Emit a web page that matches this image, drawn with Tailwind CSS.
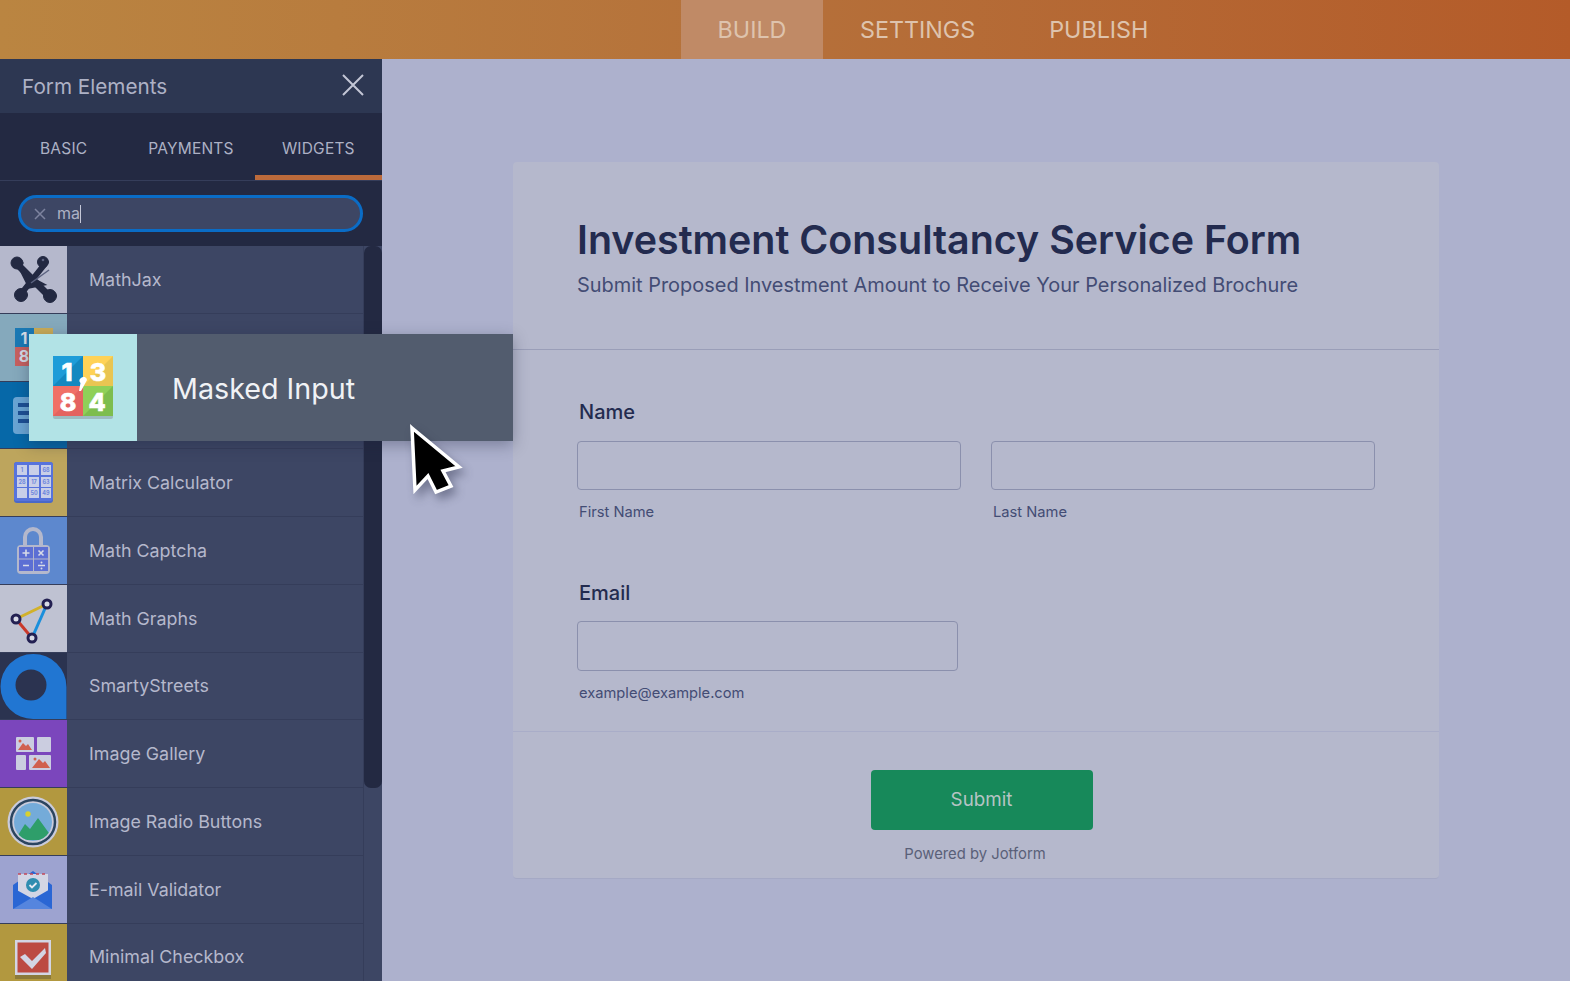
<!DOCTYPE html>
<html>
<head>
    <title>Form Builder</title>
    <meta name="viewport" content="width=device-width, initial-scale=1.0">
    <script src="https://cdn.jsdelivr.net/npm/@tailwindcss/browser@4"></script>
</head>
<body class="relative h-screen overflow-hidden bg-[#adb1cd] font-[Inter,sans-serif]">
    <!-- Top bar -->
    <header class="flex h-[59px] pl-[681px] bg-gradient-to-r from-[#ba8541] via-[#b5703a] to-[#b45b29] text-[23.3px] leading-[59px] text-[#dec3ad]">
        <div class="w-[142px] text-center bg-[#c08a66]">BUILD</div>
        <div class="px-[37px]">SETTINGS</div>
        <div class="px-[37px]">PUBLISH</div>
    </header>

    <div class="flex h-[922px]">
        <!-- Form elements panel -->
        <aside class="flex flex-col w-[382px] shrink-0 bg-[#232942]">
            <div class="flex items-center justify-between h-[54px] pl-[22px] pr-[18px] bg-[#2d3752]">
                <span class="mt-[2px] text-[20.7px] text-[#adb1c5]">Form Elements</span>
                <svg width="22" height="22" viewBox="0 0 22 22" class="mb-[3px]" fill="none" stroke="#c3c6d6" stroke-width="2"><path d="M1 1l20 20M21 1L1 21"/></svg>
            </div>
            <div class="flex h-[68px] pt-[4px] border-b border-[#353d5a] text-[15.5px] tracking-[0.2px] text-[#adb1c5]">
                <div class="flex-1 flex items-center justify-center">BASIC</div>
                <div class="flex-1 flex items-center justify-center">PAYMENTS</div>
                <div class="flex-1 flex items-center justify-center border-b-[5px] border-[#bc6a3b] pt-[5px]">WIDGETS</div>
            </div>
            <div class="h-[65px] pt-[14px] pl-[18px]">
                <div class="flex items-center w-[345px] h-[37px] rounded-full border-[3px] border-[#0a6cc6] bg-[#3d4664] pl-[13px] text-[#adb1c5]">
                    <svg width="12" height="12" viewBox="0 0 12 12" fill="none" stroke="#7d839f" stroke-width="1.5"><path d="M1 1l10 10M11 1L1 11"/></svg>
                    <span class="ml-[11px] mb-[2px] text-[16px]">ma</span><span class="w-px h-[18px] bg-[#c5c8d8]"></span>
                </div>
            </div>
            <div class="flex flex-1 overflow-hidden">
                <div class="w-[363px] shrink-0">
                    <!-- MathJax -->
                    <div class="flex h-[67.75px] items-stretch border-b border-[#353d5a] bg-[#3d4664]">
                        <div class="w-[67px] shrink-0 bg-[#b5b8cc]">
                            <svg width="67" height="67" viewBox="0 0 67 67"><g stroke="#232942" stroke-linecap="round" fill="#232942"><path d="M19 20L46 47" stroke-width="7" fill="none"/><path d="M44 19L21 48" stroke-width="6" fill="none"/><path d="M25 30L40 38L30 40z" stroke-width="5"/><circle cx="17" cy="17" r="6"/><circle cx="43" cy="16" r="5.500"/><circle cx="21" cy="49" r="6.500"/><circle cx="50" cy="50" r="6.500"/></g><path d="M31 37L49 24" stroke="#5c6380" stroke-width="1.500"/><circle cx="43" cy="14" r="1.300" fill="#5c6380"/></svg>
                        </div>
                        <span class="self-center mt-[2px] ml-[22px] text-[17.85px] text-[#b5b8cc]">MathJax</span>
                    </div>
                    <!-- Masked Input (label covered by the dragged copy) -->
                    <div class="flex h-[67.75px] items-stretch border-b border-[#353d5a] bg-[#3d4664]">
                        <div class="flex w-[67px] shrink-0 pl-[15px] pt-[14px] bg-[#85a9bc]">
                            <svg width="38" height="38" viewBox="0 0 38 38"><rect width="19" height="19" fill="#1b79b4"/><rect x="19" width="19" height="19" fill="#c9ab57"/><rect y="19" width="19" height="19" fill="#c7605f"/><rect x="19" y="19" width="19" height="19" fill="#79a85a"/><text x="9" y="16" text-anchor="middle" font-size="16" font-weight="700" fill="#d6dce6">1</text><text x="9" y="34" text-anchor="middle" font-size="16" font-weight="700" fill="#d6dce6">8</text></svg>
                        </div>
                    </div>
                    <!-- row covered by the dragged copy -->
                    <div class="flex h-[67.75px] items-stretch border-b border-[#353d5a] bg-[#3d4664]">
                        <div class="flex w-[67px] shrink-0 pl-[13px] pt-[15px] bg-[#0668a8]">
                            <svg width="42" height="38" viewBox="0 0 42 38"><rect width="42" height="37" rx="4" fill="#6aa5d4"/><path d="M5 8h30M5 16h30M5 24h30" stroke="#1c4f94" stroke-width="4"/></svg>
                        </div>
                    </div>
                    <!-- Matrix Calculator -->
                    <div class="flex h-[67.75px] items-stretch border-b border-[#353d5a] bg-[#3d4664]">
                        <div class="w-[67px] shrink-0 bg-[#bda55d]">
                            <svg width="67" height="67" viewBox="0 0 67 67"><rect x="14" y="13" width="39" height="41" rx="3" fill="#4a68c8"/><rect x="14" y="13" width="39" height="39" rx="3" fill="#5773dc"/><g fill="#c9cfe8"><rect x="17" y="16" width="10" height="10"/><rect x="29" y="16" width="10" height="10"/><rect x="41" y="16" width="10" height="10"/><rect x="17" y="28" width="10" height="10"/><rect x="29" y="28" width="10" height="10"/><rect x="41" y="28" width="10" height="10"/><rect x="17" y="39" width="10" height="10"/><rect x="29" y="39" width="10" height="10"/><rect x="41" y="39" width="10" height="10"/></g><g font-size="5.5" font-weight="700" fill="#6d86dc" text-anchor="middle"><text x="22" y="23">1</text><text x="46" y="23">68</text><text x="22" y="35">28</text><text x="34" y="35">17</text><text x="46" y="35">63</text><text x="34" y="46">50</text><text x="46" y="46">49</text></g></svg>
                        </div>
                        <span class="self-center mt-[2px] ml-[22px] text-[17.85px] text-[#b5b8cc]">Matrix Calculator</span>
                    </div>
                    <!-- Math Captcha -->
                    <div class="flex h-[67.75px] items-stretch border-b border-[#353d5a] bg-[#3d4664]">
                        <div class="w-[67px] shrink-0 bg-[#5d88ce]">
                            <svg width="67" height="67" viewBox="0 0 67 67"><path d="M25 30V20a8 8 0 0 1 16 0v10" fill="none" stroke="#b4b8cc" stroke-width="4"/><rect x="17" y="28" width="33" height="29" rx="4" fill="#b4b8cc"/><g fill="#5c6fd4"><rect x="19" y="30" width="14" height="11.5"/><rect x="34" y="30" width="14" height="11.5"/><rect x="19" y="42.5" width="14" height="11.5"/><rect x="34" y="42.5" width="14" height="11.5"/></g><path d="M22.5 36h7M26 32.5v7M38.5 33.5l5 5M43.5 33.5l-5 5M23 48.5h6M38 48.5h7" stroke="#d8dbe8" stroke-width="1.6" fill="none"/><circle cx="41.5" cy="45.5" r="1" fill="#d8dbe8"/><circle cx="41.5" cy="51.5" r="1" fill="#d8dbe8"/></svg>
                        </div>
                        <span class="self-center mt-[2px] ml-[22px] text-[17.85px] text-[#b5b8cc]">Math Captcha</span>
                    </div>
                    <!-- Math Graphs -->
                    <div class="flex h-[67.75px] items-stretch border-b border-[#353d5a] bg-[#3d4664]">
                        <div class="w-[67px] shrink-0 bg-[#bfc2d2]">
                            <svg width="67" height="67" viewBox="0 0 67 67"><path d="M16 34L47 19" stroke="#d2b12a" stroke-width="3"/><path d="M16 34L32 53" stroke="#c9382a" stroke-width="3"/><path d="M47 19L32 53" stroke="#1a8fdc" stroke-width="3"/><g fill="#d8dae6" stroke="#232052" stroke-width="3"><circle cx="47" cy="19" r="4"/><circle cx="16" cy="34" r="4"/><circle cx="32" cy="53" r="4"/></g></svg>
                        </div>
                        <span class="self-center mt-[2px] ml-[22px] text-[17.85px] text-[#b5b8cc]">Math Graphs</span>
                    </div>
                    <!-- SmartyStreets -->
                    <div class="flex h-[67.75px] items-stretch border-b border-[#353d5a] bg-[#3d4664]">
                        <div class="w-[67px] shrink-0 bg-[#2b3350]">
                            <svg width="67" height="67" viewBox="0 0 67 67"><path d="M33 1A33 33 0 0 1 66.5 34V66H33A32.5 32.5 0 0 1 33 1z" fill="#2176d2"/><circle cx="31" cy="32" r="15.5" fill="#2b3350"/></svg>
                        </div>
                        <span class="self-center mt-[2px] ml-[22px] text-[17.85px] text-[#b5b8cc]">SmartyStreets</span>
                    </div>
                    <!-- Image Gallery -->
                    <div class="flex h-[67.75px] items-stretch border-b border-[#353d5a] bg-[#3d4664]">
                        <div class="w-[67px] shrink-0 bg-[#7b46bc]">
                            <svg width="67" height="67" viewBox="0 0 67 67"><g fill="#cbcde0"><rect x="16" y="17" width="18" height="15" rx="1"/><rect x="37" y="17" width="14" height="15" rx="1"/><rect x="16" y="35" width="10" height="15" rx="1"/><rect x="29" y="35" width="22" height="15" rx="1"/></g><g fill="#d0604f"><path d="M18 30l5-7 3 3 2-2 4 6z"/><path d="M32 48l7-9 4 4 2-2 5 7z"/><circle cx="20" cy="21" r="1.5"/><circle cx="35" cy="39" r="1.5"/></g></svg>
                        </div>
                        <span class="self-center mt-[2px] ml-[22px] text-[17.85px] text-[#b5b8cc]">Image Gallery</span>
                    </div>
                    <!-- Image Radio Buttons -->
                    <div class="flex h-[67.75px] items-stretch border-b border-[#353d5a] bg-[#3d4664]">
                        <div class="w-[67px] shrink-0 bg-[#b2983f]">
                            <svg width="67" height="67" viewBox="0 0 67 67"><circle cx="33" cy="34" r="25.5" fill="#c9cbdb"/><circle cx="33" cy="34" r="22" fill="#c9cbdb" stroke="#2b4560" stroke-width="2.5"/><clipPath id="sky"><circle cx="33" cy="34" r="19"/></clipPath><g clip-path="url(#sky)"><rect x="10" y="10" width="46" height="48" fill="#74abd9"/><path d="M15 52L25 36l5 5 8-11 16 22z" fill="#2e9e6a"/></g><circle cx="28" cy="26" r="2.7" fill="#d8d02e"/></svg>
                        </div>
                        <span class="self-center mt-[2px] ml-[22px] text-[17.85px] text-[#b5b8cc]">Image Radio Buttons</span>
                    </div>
                    <!-- E-mail Validator -->
                    <div class="flex h-[67.75px] items-stretch border-b border-[#353d5a] bg-[#3d4664]">
                        <div class="w-[67px] shrink-0 bg-[#9da3d0]">
                            <svg width="67" height="67" viewBox="0 0 67 67"><path d="M13 29L33 15l19 14v24H13z" fill="#2a66d4"/><rect x="18" y="18" width="30" height="24" fill="#d3d5e4"/><path d="M18 18h30" stroke="#c2485a" stroke-width="1.5" stroke-dasharray="3 3"/><circle cx="33" cy="29" r="7" fill="#2f8db0"/><path d="M29.5 29l2.5 2.5 4.5-4.5" stroke="#e8eaf3" stroke-width="1.8" fill="none"/><path d="M13 32l20 11 19-11v21H13z" fill="#2a66d4"/><path d="M13 53l20-12 19 12z" fill="#5585de"/></svg>
                        </div>
                        <span class="self-center mt-[2px] ml-[22px] text-[17.85px] text-[#b5b8cc]">E-mail Validator</span>
                    </div>
                    <!-- Minimal Checkbox -->
                    <div class="flex h-[67.75px] items-stretch border-b border-[#353d5a] bg-[#3d4664]">
                        <div class="w-[67px] shrink-0 bg-[#b2983f]">
                            <svg width="67" height="67" viewBox="0 0 67 67"><rect x="15" y="51" width="36" height="4" fill="#8c7a3a"/><rect x="15" y="16" width="36" height="35" fill="#d3d5e4"/><rect x="17.5" y="18.5" width="31" height="30" fill="#bc4a42"/><path d="M20 33l5-3 7 7 13-13 1 5-14 16z" fill="#d3d5e4"/></svg>
                        </div>
                        <span class="self-center mt-[2px] ml-[22px] text-[17.85px] text-[#b5b8cc]">Minimal Checkbox</span>
                    </div>
                </div>
                <div class="w-[19px] shrink-0 bg-[#3d4664] border-l border-[#353d5a]">
                    <div class="h-[542px] rounded-[7px] bg-[#232942]"></div>
                </div>
            </div>
        </aside>

        <!-- Form preview -->
        <main class="flex-1 pt-[103px] pl-[131px]">
            <div class="flex flex-col w-[926px] h-[717px] rounded-[4px] bg-[#b5b8cc] border-b border-[#a5a9c5]">
                <div class="h-[188px] pt-[54px] pl-[64px] border-b border-[#9a9eb8]">
                    <h1 class="text-[39.4px] leading-[48px] font-semibold text-[#232b4f]">Investment Consultancy Service Form</h1>
                    <p class="mt-[5.5px] text-[19.95px] leading-[30px] text-[#434c74]">Submit Proposed Investment Amount to Receive Your Personalized Brochure</p>
                </div>
                <div class="h-[382px] pl-[64px] border-b border-[#a9adc8]">
                    <div class="pt-[48px] pl-[2px] text-[20px] leading-[28px] font-medium text-[#232b4f]">Name</div>
                    <div class="flex gap-[30px] mt-[15px]">
                        <div class="w-[384px]">
                            <div class="h-[49px] rounded-[4px] border border-[#8b90ad]"></div>
                            <div class="mt-[12px] pl-[2px] text-[14.7px] leading-[21px] text-[#434c74]">First Name</div>
                        </div>
                        <div class="w-[384px]">
                            <div class="h-[49px] rounded-[4px] border border-[#8b90ad]"></div>
                            <div class="mt-[12px] pl-[2px] text-[14.7px] leading-[21px] text-[#434c74]">Last Name</div>
                        </div>
                    </div>
                    <div class="pt-[56px] pl-[2px] text-[20px] leading-[28px] font-medium text-[#232b4f]">Email</div>
                    <div class="w-[381px] mt-[14px]">
                        <div class="h-[50px] rounded-[4px] border border-[#8b90ad]"></div>
                        <div class="mt-[11px] pl-[2px] text-[14.7px] leading-[22px] text-[#434c74]">example@example.com</div>
                    </div>
                </div>
                <div class="flex flex-col items-center pt-[38px]">
                    <button class="w-[222px] h-[60px] ml-[11px] rounded-[4px] bg-[#17895a] text-[18.8px] text-[#b5c4c4]">Submit</button>
                    <div class="mt-[13px] mr-[2px] text-[14.8px] leading-[22px] text-[#5a6078]">Powered by Jotform</div>
                </div>
            </div>
        </main>
    </div>

    <!-- Dragged element -->
    <div class="absolute left-[29px] top-[334px] flex w-[484px] h-[107px] bg-[#525c6e] shadow-[0_4px_14px_rgba(30,35,60,0.35)]">
        <div class="flex items-center justify-center w-[108px] shrink-0 bg-[#b2e3e6]">
            <svg width="60" height="63" viewBox="0 0 60 63">
                <rect y="3" width="60" height="60" rx="2" fill="#9cbcc0"/>
                <rect width="30" height="30" fill="#1e9cd8"/><path d="M30 0V30H0z" fill="#1488c0"/>
                <rect x="30" width="30" height="30" fill="#ffd257"/><path d="M60 0V30H30z" fill="#e9c552"/>
                <rect y="30" width="30" height="30" fill="#f06f66"/><path d="M30 30V60H0z" fill="#e4635f"/>
                <rect x="30" y="30" width="30" height="30" fill="#8fd058"/><path d="M60 30V60H30z" fill="#7dbd4e"/>
                <g font-size="25" font-weight="800" fill="#fff" stroke="#fff" stroke-width="0.6" text-anchor="middle" font-family="Inter, sans-serif">
                    <text x="14" y="24.500">1</text><text x="45" y="24.500">3</text><text x="15" y="54.500">8</text><text x="44" y="54.500">4</text>
                </g>
                <path d="M28 22a3.5 3.5 0 0 1 6 2l-6 11h-2l1.500-8a3 3 0 0 1 .5-5z" fill="#fff"/>
            </svg>
        </div>
        <span class="self-center ml-[35px] mt-[2px] text-[28.7px] text-[#f0f2f5]">Masked Input</span>
    </div>

    <!-- Cursor -->
    <svg class="absolute left-[401px] top-[416px] drop-shadow-[4px_6px_5px_rgba(30,35,60,0.4)]" width="70" height="86" viewBox="0 0 70 86">
        <path d="M11 12L58 51L42 55L50 70L35 76L27 60L14 74z" fill="#000" stroke="#fff" stroke-width="3.500"/>
    </svg>
</body>
</html>
